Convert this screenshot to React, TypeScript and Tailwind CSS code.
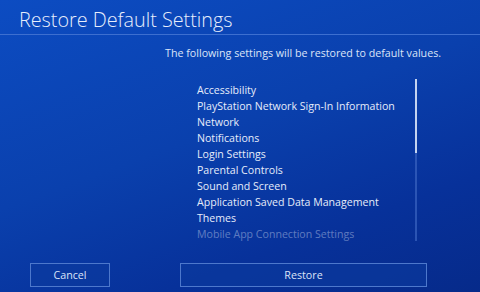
const items = [
  'Accessibility',
  'PlayStation Network Sign-In Information',
  'Network',
  'Notifications',
  'Login Settings',
  'Parental Controls',
  'Sound and Screen',
  'Application Saved Data Management',
  'Themes',
]

export default function App() {
  return (
    <div
      className="w-[480px] h-[292px] overflow-hidden flex flex-col text-white bg-[linear-gradient(160deg,#0c4cc2_0%,#0a40ad_45%,#07319a_75%,#062a8a_100%)]"
      style={{ fontFamily: '"Open Sans", "Noto Sans", sans-serif' }}
    >
      {/* Header */}
      <div className="h-[35px] border-b border-[#3d6fd0] pl-[19px] flex items-end pb-[4px]">
        <h1 className="text-[19.8px] font-light leading-none text-[#e8eefc]">Restore Default Settings</h1>
      </div>

      <p className="pl-[165px] mt-[11px] text-[10.7px] leading-[14px] text-[#dbe4f8]">
        The following settings will be restored to default values.
      </p>

      {/* List + scrollbar */}
      <div className="flex mt-[22px] h-[160px]">
        <ul className="pl-[197px] w-[412px] text-[10.6px] leading-[16px] text-[#e6ecfa] overflow-hidden">
          {items.map(item => (
            <li key={item} className="whitespace-nowrap">{item}</li>
          ))}
          <li className="whitespace-nowrap text-[#e6ecfa]/40">Mobile App Connection Settings</li>
        </ul>
        <div className="w-[2px] ml-[3px] -mt-[3px] h-[162px] flex flex-col">
          <div className="h-[74px] bg-[#c4d3f0]" />
          <div className="flex-1 bg-[#3a64c0]/70" />
        </div>
      </div>

      {/* Buttons */}
      <div className="flex mt-auto mb-[5px] h-[24px]">
        <button className="ml-[30px] w-[80px] h-[24px] border border-[#4d78cc] bg-[#0b3b9e]/60 text-[10.7px] text-[#dbe4f8]">
          Cancel
        </button>
        <button className="ml-[70px] w-[247px] h-[24px] border border-[#4d78cc] bg-[#0b3b9e]/60 text-[10.7px] text-[#dbe4f8]">
          Restore
        </button>
      </div>
    </div>
  )
}
